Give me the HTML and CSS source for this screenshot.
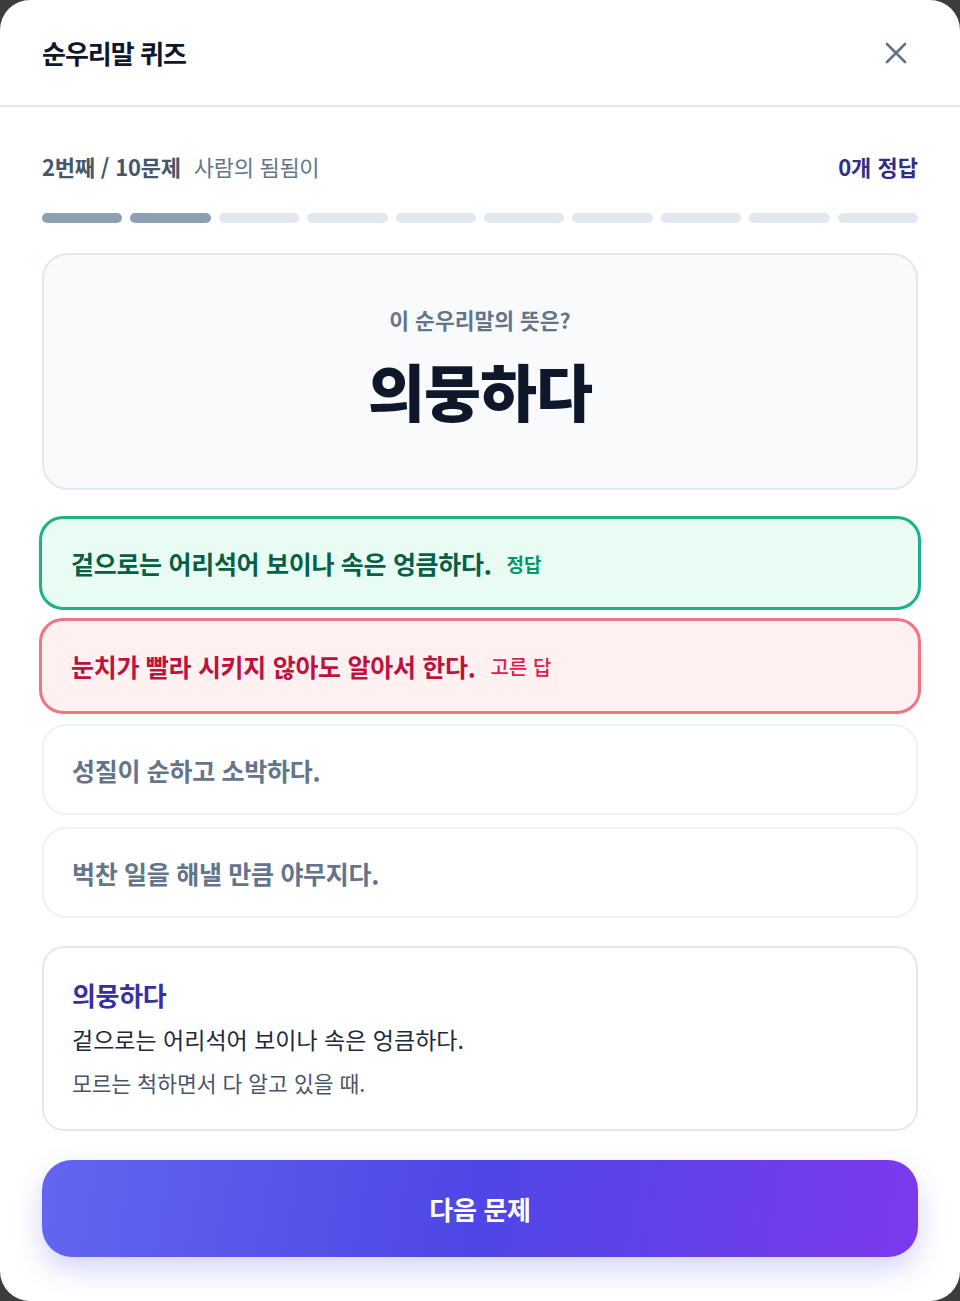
FILE: index.html
```html
<!DOCTYPE html>
<html lang="ko">
<head>
<meta charset="utf-8">
<title>순우리말 퀴즈</title>
<link rel="stylesheet" href="styles.css">
</head>
<body>
<div class="modal">
  <header class="head">
    <h1 class="title">순우리말 퀴즈</h1>
    <button class="close" aria-label="닫기">
      <svg width="24" height="24" viewBox="0 0 24 24"><path d="M3 3 L21 21 M21 3 L3 21" stroke="#64748b" stroke-width="2.6" stroke-linecap="round" fill="none"/></svg>
    </button>
  </header>
  <main class="body">
    <div class="status">
      <div class="count"><b>2번째 / 10문제</b><span class="cat">사람의 됨됨이</span></div>
      <div class="score">0개 정답</div>
    </div>
    <div class="bars">
      <span class="bar done"></span><span class="bar done"></span><span class="bar"></span><span class="bar"></span><span class="bar"></span><span class="bar"></span><span class="bar"></span><span class="bar"></span><span class="bar"></span><span class="bar"></span>
    </div>
    <section class="question">
      <p class="prompt">이 순우리말의 뜻은?</p>
      <p class="word">의뭉하다</p>
    </section>
    <div class="options">
      <div class="opt correct"><span class="txt">겉으로는 어리석어 보이나 속은 엉큼하다.</span><span class="tag">정답</span></div>
      <div class="opt wrong"><span class="txt">눈치가 빨라 시키지 않아도 알아서 한다.</span><span class="tag">고른 답</span></div>
      <div class="opt"><span class="txt">성질이 순하고 소박하다.</span></div>
      <div class="opt"><span class="txt">벅찬 일을 해낼 만큼 야무지다.</span></div>
    </div>
    <section class="explain">
      <p class="ex-word">의뭉하다</p>
      <p class="ex-def">겉으로는 어리석어 보이나 속은 엉큼하다.</p>
      <p class="ex-use">모르는 척하면서 다 알고 있을 때.</p>
    </section>
    <button class="next">다음 문제</button>
  </main>
</div>
</body>
</html>
```
FILE: styles.css
```css
* { box-sizing: border-box; }
html, body { margin: 0; padding: 0; }
body {
  background: #3d3d40;
  font-family: "Noto Sans CJK KR", "Noto Sans", sans-serif;
}
p { margin: 0; }
.modal {
  width: 960px;
  height: 1301px;
  background: #ffffff;
  border-radius: 30px;
  overflow: hidden;
  display: flex;
  flex-direction: column;
}
.head {
  height: 107px;
  flex: 0 0 107px;
  border-bottom: 2px solid #e4e7ef;
  display: flex;
  align-items: center;
  justify-content: space-between;
  padding: 0 42px;
}
.title {
  margin: 0;
  font-size: 26px;
  font-weight: 700;
  color: #0f172a;
  letter-spacing: -1px;
}
.close {
  border: 0;
  background: none;
  padding: 0;
  width: 24px;
  height: 24px;
  margin-right: 10px;
  display: flex;
}
.body {
  padding: 44px 42px 0;
  display: flex;
  flex-direction: column;
}
.status {
  height: 30px;
  display: flex;
  align-items: center;
  justify-content: space-between;
}
.count b {
  font-size: 22px;
  font-weight: 700;
  color: #475569;
  letter-spacing: -0.2px;
}
.cat {
  margin-left: 13px;
  font-size: 22px;
  color: #64748b;
  letter-spacing: -0.3px;
}
.score {
  font-size: 22px;
  font-weight: 700;
  color: #312e81;
  letter-spacing: 0;
}
.bars {
  margin-top: 32px;
  display: grid;
  grid-template-columns: repeat(10, 1fr);
  gap: 8px;
}
.bar {
  height: 10px;
  border-radius: 5px;
  background: #e2e8f0;
}
.bar.done { background: #8e9fb4; }
.question {
  margin-top: 30px;
  height: 237px;
  border: 2px solid #e2e8f0;
  border-radius: 26px;
  background: #f8fafc;
  display: flex;
  flex-direction: column;
  align-items: center;
  padding-top: 50px;
}
.prompt {
  font-size: 21.5px;
  font-weight: 700;
  color: #64748b;
  letter-spacing: 0;
  line-height: 30px;
}
.word {
  margin-top: 13px;
  font-size: 62px;
  font-weight: 900;
  color: #0f172a;
  letter-spacing: -1px;
  line-height: 84px;
}
.options {
  margin-top: 26px;
  display: flex;
  flex-direction: column;
  gap: 10px;
}
.opt {
  height: 91px;
  border: 2px solid #eef2f6;
  border-radius: 24px;
  background: #ffffff;
  display: flex;
  align-items: center;
  padding: 0 28px;
}
.txt {
  font-size: 25px;
  font-weight: 700;
  color: #64748b;
  letter-spacing: -0.3px;
}
.tag {
  margin-left: 15px;
  font-size: 19px;
  font-weight: 700;
  letter-spacing: 0;
}
.opt.correct {
  height: 94px;
  margin: 0 -3px -2px;
  border: 3px solid #1db283;
  background: #e9fcf3;
  padding-left: 29px;
}
.opt.correct .txt { color: #065f46; }
.opt.correct .tag { color: #059669; }
.opt.wrong {
  height: 96px;
  margin: 0 -3px;
  border: 3px solid #f07482;
  background: #fff1f2;
  padding-left: 29px;
}
.opt.wrong .txt { color: #be123c; }
.opt.wrong .tag { color: #e11d48; font-weight: 500; font-size: 20px; }
.options .opt:nth-child(3) { margin-bottom: 2px; }
.explain {
  margin-top: 28px;
  height: 185px;
  border: 2px solid #e2e8f0;
  border-radius: 22px;
  padding: 28px 28px 0;
  display: flex;
  flex-direction: column;
}
.ex-word {
  font-size: 26px;
  font-weight: 700;
  color: #3730a3;
  letter-spacing: -0.3px;
  line-height: 38px;
}
.ex-def {
  margin-top: 6px;
  font-size: 23px;
  color: #1e293b;
  letter-spacing: 0;
  line-height: 38px;
}
.ex-use {
  margin-top: 9px;
  font-size: 21.5px;
  color: #475569;
  letter-spacing: 0;
  line-height: 32px;
}
.next {
  margin-top: 29px;
  height: 97px;
  border: 0;
  border-radius: 30px;
  background: linear-gradient(100deg, #6366f1 0%, #4f46e5 50%, #7c3aed 100%);
  box-shadow: 0 12px 28px rgba(99, 102, 241, 0.28);
  color: #ffffff;
  font-family: inherit;
  font-size: 26px;
  font-weight: 700;
  letter-spacing: -0.3px;
}
```
